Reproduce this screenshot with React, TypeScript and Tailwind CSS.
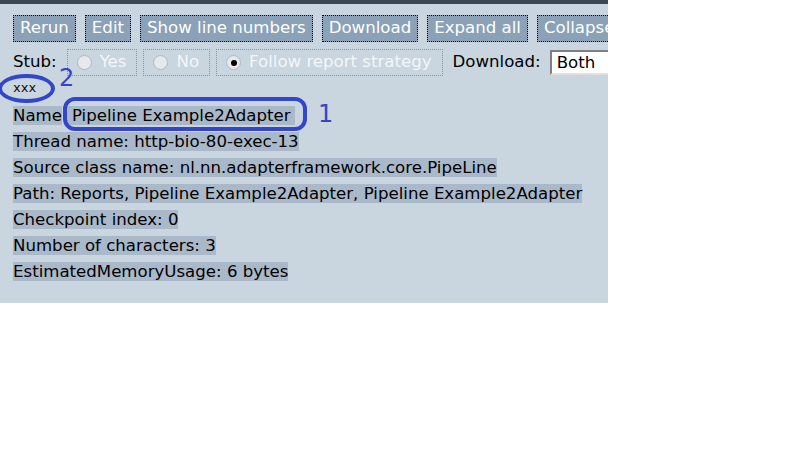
const buttons = ["Rerun", "Edit", "Show line numbers", "Download", "Expand all", "Collapse all"];

const lines = [
  "Thread name: http-bio-80-exec-13",
  "Source class name: nl.nn.adapterframework.core.PipeLine",
  "Path: Reports, Pipeline Example2Adapter, Pipeline Example2Adapter",
  "Checkpoint index: 0",
  "Number of characters: 3",
  "EstimatedMemoryUsage: 6 bytes",
];

function Radio({ label, checked }: { label: string; checked?: boolean }) {
  return (
    <label className="flex items-center gap-[8px] h-[27px] pl-[9px] pr-[10px] border border-dotted border-[#8a949c] text-[#f4f6f8] shrink-0">
      <span className="w-[15px] h-[15px] rounded-full border border-[#b0b8c0] bg-[#e6e8ea] flex items-center justify-center">
        {checked && <span className="w-[6px] h-[6px] rounded-full bg-black" />}
      </span>
      {label}
    </label>
  );
}

export default function App() {
  return (
    <div className="w-[807px] h-[466px] bg-white" style={{ fontFamily: '"DejaVu Sans", Verdana, sans-serif' }}>
      <div className="relative w-[608px] h-[303px] bg-[#c9d5df] border-t-[4px] border-[#3d4653] overflow-hidden text-[16.6px] text-black">
        <div className="flex gap-[9px] pl-[13px] pt-[11px] whitespace-nowrap">
          {buttons.map((b) => (
            <button
              key={b}
              className="h-[27px] px-[6px] bg-[#8aa1b8] text-white border border-dotted border-black leading-none shrink-0"
            >
              {b}
            </button>
          ))}
        </div>

        <div className="flex items-center gap-[6px] pl-[13px] mt-[7px] whitespace-nowrap">
          <span className="mr-[4px]">Stub:</span>
          <Radio label="Yes" />
          <Radio label="No" />
          <Radio label="Follow report strategy" checked />
          <span className="ml-[4px]">Download:</span>
          <div className="ml-[3px] h-[25px] w-[120px] bg-white border-2 border-t-[#808080] border-l-[#808080] border-r-[#e0e0e0] border-b-[#e0e0e0] pl-[5px] leading-[21px] shrink-0">
            Both
          </div>
        </div>

        <div className="pl-[13px] mt-[4px] text-[13px] leading-[18px]" style={{ fontFamily: '"Liberation Mono", monospace' }}>
          xxx
        </div>

        <div className="pl-[13px] mt-[7px] leading-[21px]">
          <div className="mb-[5px]">
            <span className="bg-[#a9b9ca]">Name</span>
            <span className="bg-[#a9b9ca] ml-[4px] pl-[6px] pr-[4px]">Pipeline Example2Adapter</span>
          </div>
          {lines.map((l) => (
            <div key={l} className="mb-[5px]">
              <span className="bg-[#a9b9ca]">{l}</span>
            </div>
          ))}
        </div>

        {/* annotations */}
        <div className="absolute left-[-2px] top-[70px] w-[57px] h-[29px] rounded-[50%] border-[4px] border-[#3545c8]" />
        <div className="absolute left-[63px] top-[93px] w-[244px] h-[34px] rounded-[12px] border-[4px] border-[#3545c8]" />
        <span className="absolute left-[59px] top-[62px] text-[24px] leading-none text-[#3545c8]">2</span>
        <span className="absolute left-[318px] top-[98px] text-[24px] leading-none text-[#3545c8]">1</span>
      </div>
    </div>
  );
}
